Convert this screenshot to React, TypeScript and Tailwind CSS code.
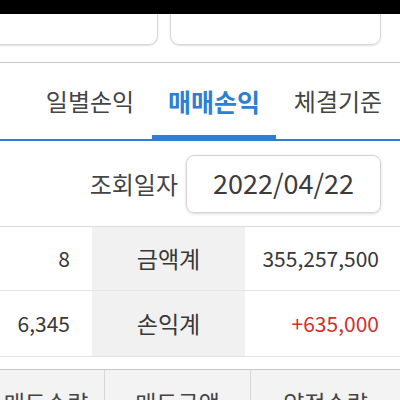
import React from "react";

const font = {
  fontFamily: '"Noto Sans CJK KR", "Noto Sans", sans-serif',
};

const tabs = ["일별손익", "매매손익", "체결기준"];

export default function App() {
  const [active, setActive] = React.useState(1);

  return (
    <div className="w-[400px] h-[400px] overflow-hidden bg-white text-[#383838]" style={font}>
      <div className="h-[14px] bg-black" />

      {/* top cards, partly hidden */}
      <div className="h-[49px] flex items-end gap-[12px] pb-[17px] overflow-hidden border-b border-[#c9c9c9]">
        <div className="w-[170px] h-[60px] -ml-[12px] shrink-0 rounded-[9px] border border-[#d6d6d6] shadow-[0_1px_2px_rgba(0,0,0,0.12)]" />
        <div className="w-[211px] h-[60px] shrink-0 rounded-[9px] border border-[#d6d6d6] shadow-[0_1px_2px_rgba(0,0,0,0.12)]" />
      </div>

      {/* tabs */}
      <div className="h-[78px] flex items-stretch border-b-2 border-[#2d7fd6]">
        <div className="w-[28px] shrink-0 flex items-center justify-end pr-[27px] text-[24px] whitespace-nowrap text-[#444]">
          손익
        </div>
        {tabs.map((t, i) => (
          <button
            key={t}
            onClick={() => setActive(i)}
            className={
              i === active
                ? "w-[124px] shrink-0 flex items-center justify-center text-[25px] font-bold text-[#2d7fd6] border-b-[6px] border-[#2d7fd6] -mb-[2px]"
                : "w-[124px] shrink-0 flex items-center justify-center text-[24px] text-[#444]"
            }
          >
            <span className={i === active ? "mt-[6px]" : ""}>{t}</span>
          </button>
        ))}
      </div>

      {/* date */}
      <div className="h-[86px] flex items-center justify-end gap-[8px] pr-[19px] border-b border-[#dcdcdc]">
        <span className="text-[24px] text-[#444]">조회일자</span>
        <div className="w-[195px] h-[58px] rounded-[8px] border border-[#d4d4d4] shadow-[0_1px_3px_rgba(0,0,0,0.15)] flex items-center justify-center text-[27px] text-[#3c3c3c]">
          2022/04/22
        </div>
      </div>

      {/* summary */}
      <div className="grid grid-cols-[92px_153px_155px]">
        <div className="h-[64px] flex items-center justify-end pr-[22px] text-[21px] border-b border-[#e3e3e3]">8</div>
        <div className="h-[64px] flex items-center justify-center bg-[#f1f1f1] text-[23px] border-b border-[#e6e6e6]">금액계</div>
        <div className="h-[64px] flex items-center justify-end pr-[21px] text-[21px] border-b border-[#e3e3e3]">355,257,500</div>
        <div className="h-[66px] flex items-center justify-end pr-[22px] text-[21px] border-b border-[#e3e3e3]">6,345</div>
        <div className="h-[66px] flex items-center justify-center bg-[#f1f1f1] text-[23px] border-b border-[#e3e3e3]">손익계</div>
        <div className="h-[66px] flex items-center justify-end pr-[21px] text-[21px] text-[#d2302c] border-b border-[#e3e3e3]">+635,000</div>
      </div>

      <div className="h-[12px]" />

      {/* list header */}
      <div className="grid grid-cols-[104px_146px_150px] border-t border-[#c8c8c8] bg-[#f3f3f3] text-[23px] text-[#444]">
        <div className="h-[50px] flex items-center justify-center pr-[12px] pt-[14px] whitespace-nowrap">매도수량</div>
        <div className="h-[50px] flex items-center justify-center pt-[14px] border-l border-[#d6d6d6]">매도금액</div>
        <div className="h-[50px] flex items-center justify-center pt-[14px] border-l border-[#d6d6d6]">약정수량</div>
      </div>
    </div>
  );
}
